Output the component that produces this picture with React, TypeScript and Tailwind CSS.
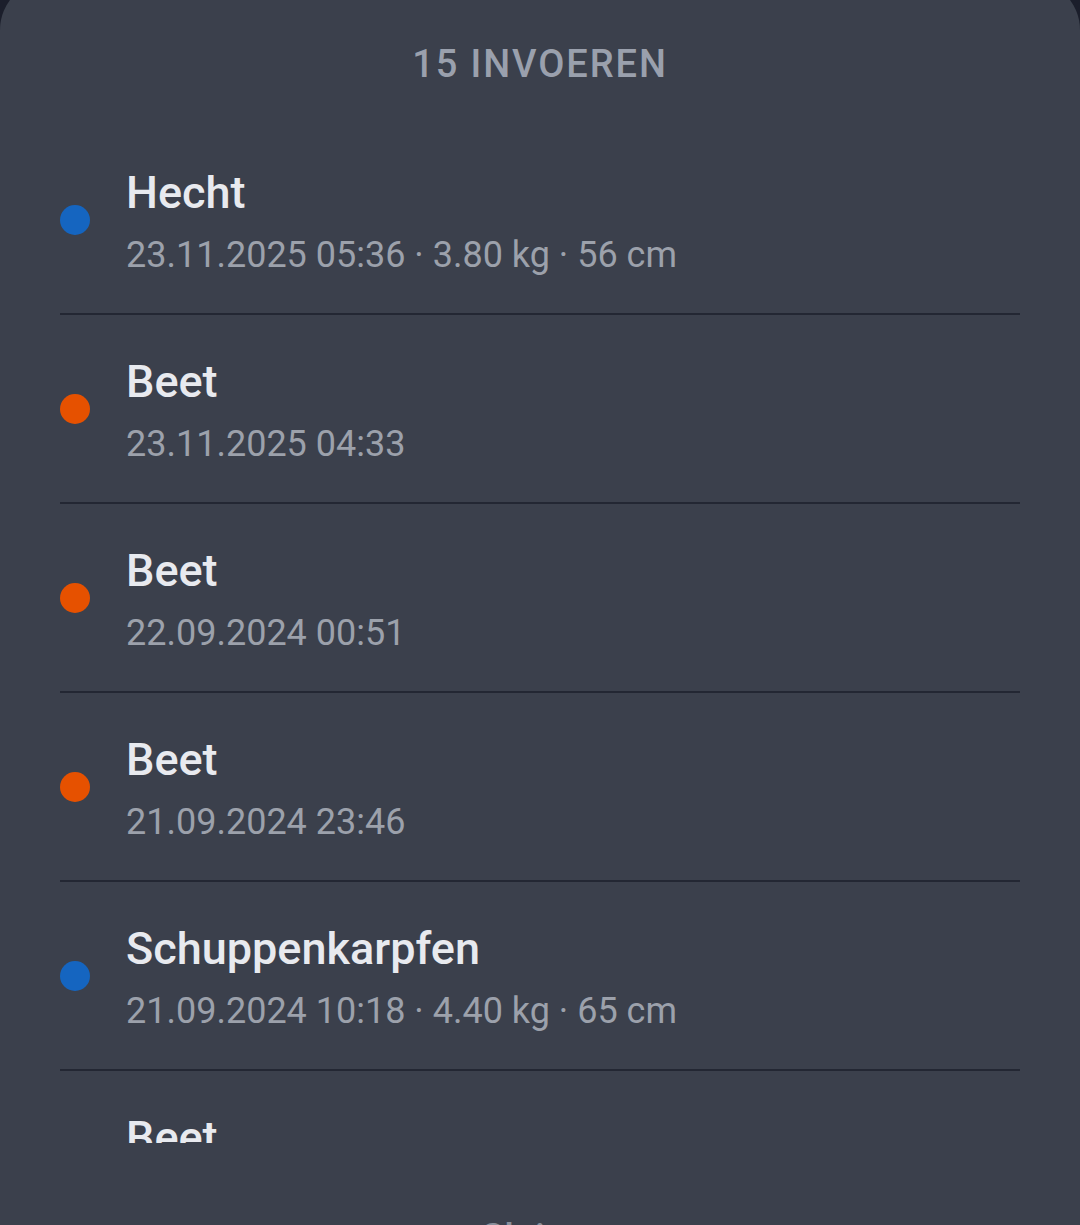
import React from "react";

type Entry = { name: string; meta: string; color: "blue" | "orange" };

const entries: Entry[] = [
  { name: "Hecht", meta: "23.11.2025 05:36 · 3.80 kg · 56 cm", color: "blue" },
  { name: "Beet", meta: "23.11.2025 04:33", color: "orange" },
  { name: "Beet", meta: "22.09.2024 00:51", color: "orange" },
  { name: "Beet", meta: "21.09.2024 23:46", color: "orange" },
  { name: "Schuppenkarpfen", meta: "21.09.2024 10:18 · 4.40 kg · 65 cm", color: "blue" },
  { name: "Beet", meta: "21.09.2024 08:12", color: "orange" },
  { name: "Beet", meta: "20.09.2024 22:05", color: "orange" },
];

function Row({ e, last }: { e: Entry; last: boolean }) {
  return (
    <div className={last ? "" : "border-b-2 border-[#232733]"}>
      <div className="flex h-[187px] items-center">
        <div
          className={
            e.color === "blue"
              ? "h-[30px] w-[30px] shrink-0 rounded-full bg-[#1565c0]"
              : "h-[30px] w-[30px] shrink-0 rounded-full bg-[#e65100]"
          }
        />
        <div className="ml-[36px] flex flex-col pt-[5px]">
          <div className="text-[45px] leading-[52px] font-medium text-[#e8eaef]">{e.name}</div>
          <div className="mt-[14px] text-[36px] leading-[44px] text-[#9ca1ab]">{e.meta}</div>
        </div>
      </div>
    </div>
  );
}

export default function App() {
  return (
    <div
      className="h-[1225px] w-full overflow-hidden bg-[#1b1e2b]"
      style={{ fontFamily: "Roboto, 'Noto Sans', sans-serif" }}
    >
      <div className="mt-[-20px] flex h-[1245px] flex-col rounded-t-[50px] bg-[#3b404c]">
        <div className="pt-[62px] pb-[40px] text-center text-[38px] leading-[44px] font-medium tracking-[0.05em] text-[#9aa0ad]">
          15 INVOEREN
        </div>
        <div className="h-[1017px] shrink-0 overflow-hidden px-[60px]">
          {entries.map((e, i) => (
            <Row key={i} e={e} last={i === entries.length - 1} />
          ))}
        </div>
        <div className="mt-[73px] text-center text-[38px] leading-[44px] font-medium text-[#8a909c]">
          Sluiten
        </div>
      </div>
    </div>
  );
}
